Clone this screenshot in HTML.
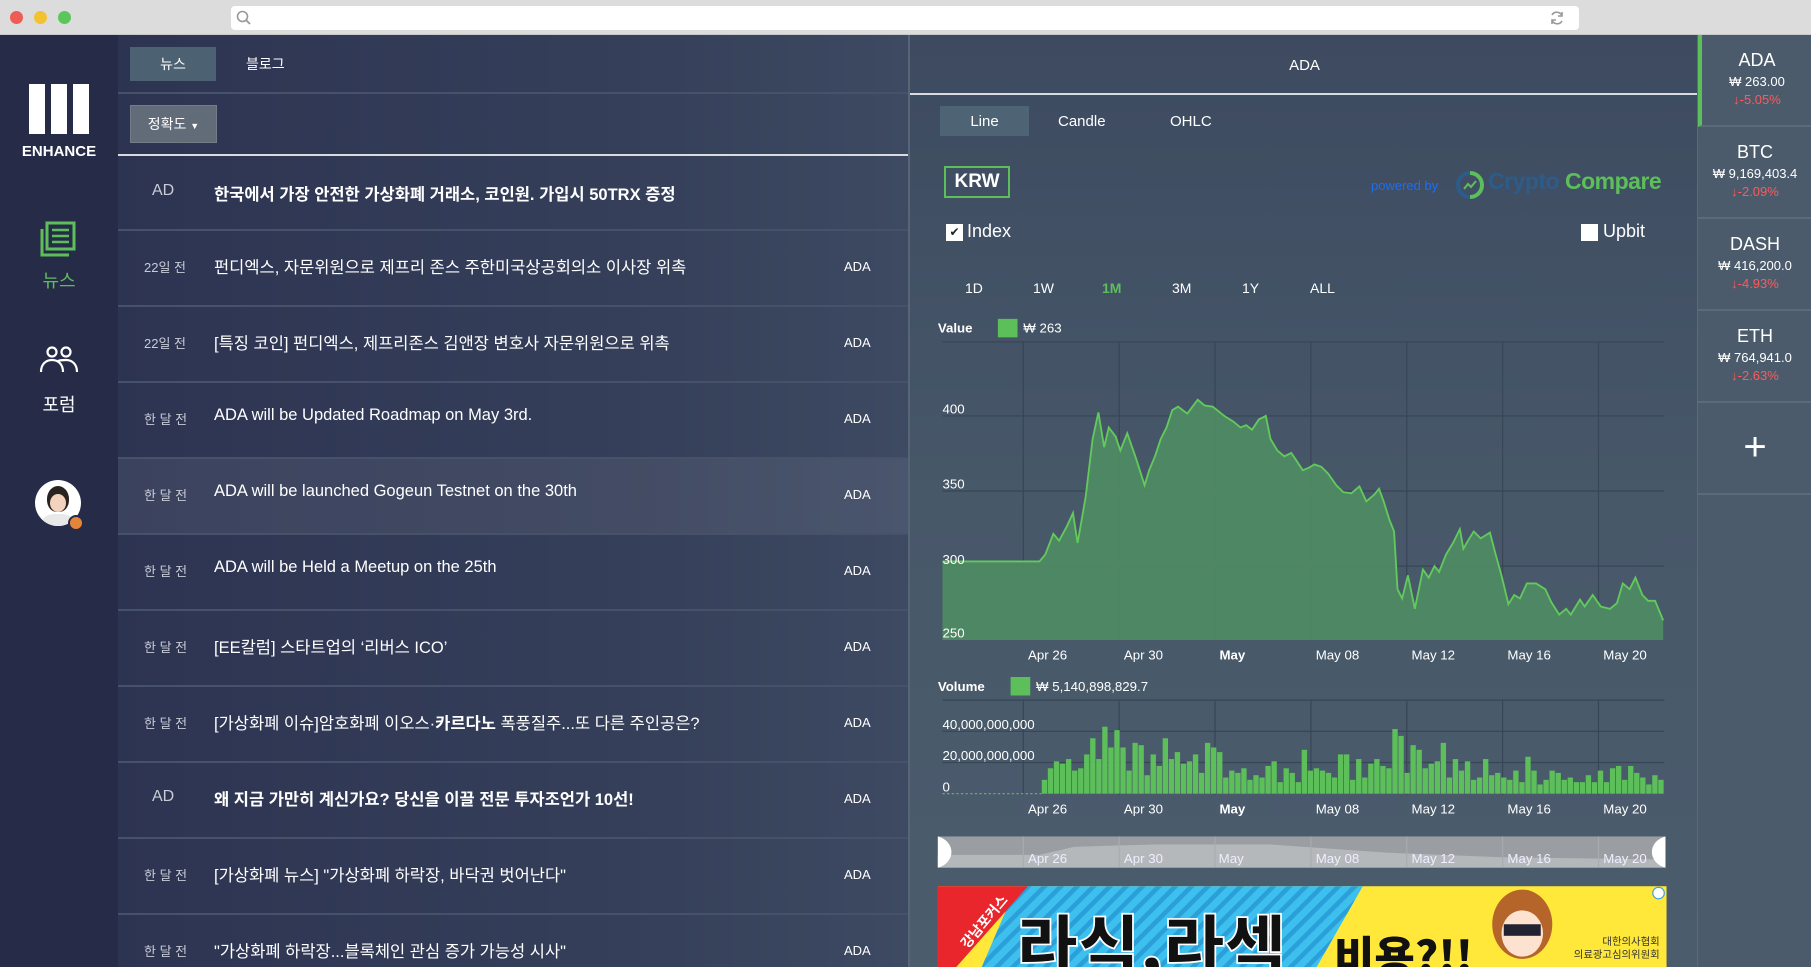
<!DOCTYPE html>
<html style="overflow:hidden"><head><meta charset="utf-8">
<style>
*{margin:0;padding:0;box-sizing:border-box}
html{height:967px;overflow:hidden}
body{width:1811px;height:967px;overflow:hidden;position:relative;background:#2a3150;font-family:"Liberation Sans","Noto Sans CJK KR",sans-serif;color:#fff}
.abs{position:absolute}
#chrome{left:0;top:0;width:1811px;height:35px;background:#dcdcdc;border-bottom:1px solid #c8c8c8}
.dot{width:13px;height:13px;border-radius:50%;top:11px}
#addr{left:231px;top:6px;width:1348px;height:24px;background:#fff;border-radius:4px}
#left{left:0;top:35px;width:118px;height:932px;background:#262c48}
#news{left:118px;top:35px;width:790px;height:932px;background:linear-gradient(90deg,#2d3452 0%,#36405a 70%,#3d4a62 100%)}
#chart{left:908px;top:35px;width:789px;height:932px;background:linear-gradient(180deg,#3d4a60 0%,#475869 50%,#4b5c6d 100%);border-left:2px solid #566577}
#right{left:1697px;top:35px;width:114px;height:932px;background:#4b5b6b;border-left:1px solid #5a6a7a}
.row{position:absolute;left:0;width:790px;height:76px;border-top:2px solid #45526a}
.row .d{position:absolute;left:26px;top:26px;font-size:13px;color:#c8ccd6}
.row .d.ad{left:34px;top:25px;font-size:16px}
.row .t{position:absolute;left:96px;top:23px;font-size:16.5px;color:#fff;white-space:nowrap}
.row .t.b{font-weight:bold}
.row .a{position:absolute;left:726px;top:28px;font-size:13px;color:#fff}
.coin{position:absolute;left:0;width:114px;height:92px;border-bottom:2px solid #5b6b7a;text-align:center}
.coin .n{margin-top:15px;font-size:18px}
.coin .p{font-size:13px;margin-top:3px}
.coin .c{font-size:13px;color:#ff5a5a;margin-top:3px}
</style></head><body>
<div id="chrome" class="abs">
<div class="abs dot" style="left:10px;background:#ee5c56"></div>
<div class="abs dot" style="left:34px;background:#f2c230"></div>
<div class="abs dot" style="left:58px;background:#5bc75a"></div>
<div id="addr" class="abs">
<svg class="abs" style="left:5px;top:4px" width="16" height="16" viewBox="0 0 16 16"><circle cx="6.5" cy="6.5" r="5" fill="none" stroke="#999" stroke-width="1.6"/><path d="M10 10l4 4" stroke="#999" stroke-width="1.8"/></svg>
<svg class="abs" style="left:1318px;top:4px" width="16" height="16" viewBox="0 0 16 16"><path d="M13 6a5.5 5.5 0 0 0-10-1M3 10a5.5 5.5 0 0 0 10 1" fill="none" stroke="#999" stroke-width="1.6"/><path d="M13 2v4h-4M3 14v-4h4" fill="none" stroke="#999" stroke-width="1.6"/></svg>
</div>
</div>

<div id="left" class="abs">
<div class="abs" style="left:29px;top:49px;width:16px;height:50px;background:#fff"></div>
<div class="abs" style="left:51px;top:49px;width:16px;height:50px;background:#fff"></div>
<div class="abs" style="left:73px;top:49px;width:16px;height:50px;background:#fff"></div>
<div class="abs" style="left:0;top:108px;width:118px;text-align:center;font-weight:bold;font-size:15px">ENHANCE</div>
<svg class="abs" style="left:40px;top:186px" width="36" height="36" viewBox="0 0 36 36"><rect x="7" y="2" width="27" height="26" fill="none" stroke="#5cbf5a" stroke-width="3"/><path d="M2 8v26h27" fill="none" stroke="#5cbf5a" stroke-width="3"/><path d="M12 9h17M12 15h17M12 21h17" stroke="#5cbf5a" stroke-width="2.5"/></svg>
<div class="abs" style="left:0;top:232px;width:118px;text-align:center;font-size:18px;color:#5cbf5a">뉴스</div>
<svg class="abs" style="left:38px;top:310px" width="42" height="32" viewBox="0 0 42 32"><circle cx="14" cy="7" r="4.5" fill="none" stroke="#fff" stroke-width="2.2"/><circle cx="28" cy="7" r="4.5" fill="none" stroke="#fff" stroke-width="2.2"/><path d="M3 27c0-8 5-12 11-12s11 4 11 12M20 16c2-1 5-1 8-1 6 0 11 4 11 12" fill="none" stroke="#fff" stroke-width="2.2"/></svg>
<div class="abs" style="left:0;top:356px;width:118px;text-align:center;font-size:18px">포럼</div>
<div class="abs" style="left:35px;top:445px;width:46px;height:46px;border-radius:50%;background:#fff;overflow:hidden"><div class="abs" style="left:12px;top:6px;width:22px;height:26px;border-radius:50% 50% 45% 45%;background:#2a2420"></div><div class="abs" style="left:15px;top:14px;width:16px;height:18px;border-radius:50%;background:#f3d3be"></div><div class="abs" style="left:8px;top:34px;width:30px;height:16px;border-radius:40%;background:#e8e8e8"></div></div>
<div class="abs" style="left:68px;top:480px;width:16px;height:16px;border-radius:50%;background:#e5853a;border:2px solid #262c48"></div>
</div>

<div id="news" class="abs">
<div class="abs" style="left:12px;top:12px;width:86px;height:34px;background:#4c6272;text-align:center;line-height:34px;font-size:14px">뉴스</div>
<div class="abs" style="left:128px;top:12px;height:34px;line-height:34px;font-size:14px">블로그</div>
<div class="abs" style="left:0;top:57px;width:790px;height:2px;background:#45526a"></div>
<div class="abs" style="left:12px;top:70px;width:87px;height:38px;background:#626b78;border:1px solid #747c88;text-align:center;line-height:36px;font-size:14px">정확도 <span style="font-size:9px">▼</span></div>
<div class="abs" style="left:0;top:119px;width:790px;height:2px;background:#d8dbe0"></div>
<div class="row" style="top:121px;height:73px;border-top:none"><span class="d ad" style="top:26px">AD</span><span class="t b" style="top:25px">한국에서 가장 안전한 가상화폐 거래소, 코인원. 가입시 50TRX 증정</span></div>
<div class="row" style="top:194px"><span class="d">22일 전</span><span class="t">펀디엑스, 자문위원으로 제프리 존스 주한미국상공회의소 이사장 위촉</span><span class="a">ADA</span></div>
<div class="row" style="top:270px"><span class="d">22일 전</span><span class="t">[특징 코인] 펀디엑스, 제프리존스 김앤장 변호사 자문위원으로 위촉</span><span class="a">ADA</span></div>
<div class="row" style="top:346px"><span class="d">한 달 전</span><span class="t">ADA will be Updated Roadmap on May 3rd.</span><span class="a">ADA</span></div>
<div class="row" style="top:422px;background:rgba(255,255,255,0.07)"><span class="d">한 달 전</span><span class="t">ADA will be launched Gogeun Testnet on the 30th</span><span class="a">ADA</span></div>
<div class="row" style="top:498px"><span class="d">한 달 전</span><span class="t">ADA will be Held a Meetup on the 25th</span><span class="a">ADA</span></div>
<div class="row" style="top:574px"><span class="d">한 달 전</span><span class="t">[EE칼럼] 스타트업의 ‘리버스 ICO’</span><span class="a">ADA</span></div>
<div class="row" style="top:650px"><span class="d">한 달 전</span><span class="t">[가상화폐 이슈]암호화폐 이오스·<b>카르다노</b> 폭풍질주...또 다른 주인공은?</span><span class="a">ADA</span></div>
<div class="row" style="top:726px"><span class="d ad">AD</span><span class="t b">왜 지금 가만히 계신가요? 당신을 이끌 전문 투자조언가 10선!</span><span class="a">ADA</span></div>
<div class="row" style="top:802px"><span class="d">한 달 전</span><span class="t">[가상화폐 뉴스] "가상화폐 하락장, 바닥권 벗어난다"</span><span class="a">ADA</span></div>
<div class="row" style="top:878px"><span class="d">한 달 전</span><span class="t">"가상화폐 하락장...블록체인 관심 증가 가능성 시사"</span><span class="a">ADA</span></div>
</div>

<div id="chart" class="abs">
<div class="abs" style="left:0;top:22px;width:789px;text-align:center;font-size:15px">ADA</div>
<div class="abs" style="left:0;top:58px;width:787px;height:2px;background:#d8dbe0"></div>
<div class="abs" style="left:30px;top:71px;width:89px;height:30px;background:#4e6474;text-align:center;line-height:31px;font-size:15px">Line</div>
<div class="abs" style="left:148px;top:72px;line-height:30px;font-size:15px">Candle</div>
<div class="abs" style="left:260px;top:72px;line-height:30px;font-size:15px">OHLC</div>
<div class="abs" style="left:34px;top:131px;width:66px;height:32px;border:2px solid #5cbf5a;text-align:center;line-height:28px;font-size:19px;font-weight:bold">KRW</div>
<div class="abs" style="left:461px;top:143px;font-size:13px;color:#1a6ff0">powered by</div>
<svg class="abs" style="left:543px;top:134px" width="36" height="32" viewBox="0 0 36 32"><circle cx="17" cy="16" r="12" fill="none" stroke="#2c5c8a" stroke-width="4"/><path d="M17 4a12 12 0 0 1 0 24" fill="none" stroke="#5cbf5a" stroke-width="4"/><path d="M11 20l4-5 3 3 5-6" fill="none" stroke="#5cbf5a" stroke-width="2"/></svg>
<div class="abs" style="left:578px;top:133px;font-size:23px;font-weight:bold;letter-spacing:-0.5px"><span style="color:#2c5c8a">Crypto</span> <span style="color:#5cbf5a">Compare</span></div>
<div class="abs" style="left:36px;top:189px;width:17px;height:17px;background:#fff;color:#222;font-size:12px;text-align:center;line-height:17px">✔</div>
<div class="abs" style="left:57px;top:186px;font-size:18px">Index</div>
<div class="abs" style="left:671px;top:189px;width:17px;height:17px;background:#fff"></div>
<div class="abs" style="left:693px;top:186px;font-size:18px">Upbit</div>
<div class="abs" style="left:55px;top:245px;font-size:14px">1D</div>
<div class="abs" style="left:123px;top:245px;font-size:14px">1W</div>
<div class="abs" style="left:192px;top:245px;font-size:14px;color:#5cbf5a;font-weight:bold">1M</div>
<div class="abs" style="left:262px;top:245px;font-size:14px">3M</div>
<div class="abs" style="left:332px;top:245px;font-size:14px">1Y</div>
<div class="abs" style="left:400px;top:245px;font-size:14px">ALL</div>
</div>

<svg class="abs" style="left:0;top:0" width="1811" height="967" viewBox="0 0 1568 837" preserveAspectRatio="none" font-family="Liberation Sans, sans-serif">
<g font-size="11.5" fill="#fff">
<text x="812" y="288" font-weight="bold">Value</text>
<rect x="864" y="276" width="17" height="16" fill="#5cbf5a"/>
<text x="886" y="288">₩ 263</text>
</g>
<g stroke="#374556" stroke-width="1">
<line x1="816" y1="296" x2="1441" y2="296"/>
<line x1="816" y1="360" x2="1441" y2="360"/><line x1="816" y1="425" x2="1441" y2="425"/><line x1="816" y1="490" x2="1441" y2="490"/>
<line x1="886" y1="296" x2="886" y2="554"/><line x1="969" y1="296" x2="969" y2="554"/><line x1="1052" y1="296" x2="1052" y2="554"/><line x1="1135" y1="296" x2="1135" y2="554"/><line x1="1218" y1="296" x2="1218" y2="554"/><line x1="1301" y1="296" x2="1301" y2="554"/><line x1="1384" y1="296" x2="1384" y2="554"/>
</g>
<polygon fill="#4f8a63" fill-opacity="0.95" points="816,554 816,486 900,486 905,480 912,462 917,468 924,455 929,444 933,470 940,430 946,380 951,357 956,387 960,370 966,378 970,390 976,375 984,398 991,420 995,407 1000,395 1005,380 1010,370 1015,355 1020,352 1028,358 1037,346 1043,351 1050,352 1060,360 1068,365 1074,370 1079,368 1084,372 1090,363 1096,360 1100,380 1106,390 1112,395 1118,392 1122,398 1128,407 1133,405 1138,402 1144,404 1150,410 1157,420 1163,426 1170,427 1177,421 1183,434 1190,428 1194,423 1198,434 1203,450 1207,460 1210,510 1214,518 1219,498 1225,527 1232,493 1237,500 1242,490 1246,495 1252,480 1258,470 1264,458 1267,475 1271,468 1276,460 1282,466 1290,461 1295,480 1300,498 1306,523 1311,515 1316,518 1322,505 1330,505 1338,510 1343,521 1350,532 1356,527 1360,532 1368,519 1372,525 1379,515 1386,525 1394,527 1400,522 1405,505 1411,510 1416,500 1422,515 1427,520 1433,520 1440,537 1440,554"/>
<polyline fill="none" stroke="#62c95c" stroke-width="1.6" points="816,486 900,486 905,480 912,462 917,468 924,455 929,444 933,470 940,430 946,380 951,357 956,387 960,370 966,378 970,390 976,375 984,398 991,420 995,407 1000,395 1005,380 1010,370 1015,355 1020,352 1028,358 1037,346 1043,351 1050,352 1060,360 1068,365 1074,370 1079,368 1084,372 1090,363 1096,360 1100,380 1106,390 1112,395 1118,392 1122,398 1128,407 1133,405 1138,402 1144,404 1150,410 1157,420 1163,426 1170,427 1177,421 1183,434 1190,428 1194,423 1198,434 1203,450 1207,460 1210,510 1214,518 1219,498 1225,527 1232,493 1237,500 1242,490 1246,495 1252,480 1258,470 1264,458 1267,475 1271,468 1276,460 1282,466 1290,461 1295,480 1300,498 1306,523 1311,515 1316,518 1322,505 1330,505 1338,510 1343,521 1350,532 1356,527 1360,532 1368,519 1372,525 1379,515 1386,525 1394,527 1400,522 1405,505 1411,510 1416,500 1422,515 1427,520 1433,520 1440,537"/>
<g font-size="11.5" fill="#fff">
<text x="816" y="358">400</text><text x="816" y="423">350</text><text x="816" y="488">300</text><text x="816" y="552">250</text>
</g>
<g font-size="11.5" fill="#fff" text-anchor="middle">
<text x="907" y="571">Apr 26</text><text x="990" y="571">Apr 30</text><text x="1067" y="571" font-weight="bold">May</text><text x="1158" y="571">May 08</text><text x="1241" y="571">May 12</text><text x="1324" y="571">May 16</text><text x="1407" y="571">May 20</text>
</g>
<g font-size="11.5" fill="#fff">
<text x="812" y="598" font-weight="bold">Volume</text>
<rect x="875" y="586" width="17" height="16" fill="#5cbf5a"/>
<text x="897" y="598">₩ 5,140,898,829.7</text>
</g>
<g stroke="#374556" stroke-width="1">
<line x1="816" y1="606" x2="1441" y2="606"/><line x1="816" y1="633" x2="1441" y2="633"/><line x1="816" y1="660" x2="1441" y2="660"/>
<line x1="886" y1="606" x2="886" y2="688"/><line x1="969" y1="606" x2="969" y2="688"/><line x1="1052" y1="606" x2="1052" y2="688"/><line x1="1135" y1="606" x2="1135" y2="688"/><line x1="1218" y1="606" x2="1218" y2="688"/><line x1="1301" y1="606" x2="1301" y2="688"/><line x1="1384" y1="606" x2="1384" y2="688"/>
</g>
<line x1="816" y1="687" x2="902" y2="687" stroke="#5cbf5a" stroke-dasharray="2,2"/>
<g id="bars" fill="#5cbf5a"></g>
<g font-size="11.5" fill="#fff">
<text x="816" y="631">40,000,000,000</text><text x="816" y="658">20,000,000,000</text><text x="816" y="685">0</text>
</g>
<g font-size="11.5" fill="#fff" text-anchor="middle">
<text x="907" y="704">Apr 26</text><text x="990" y="704">Apr 30</text><text x="1067" y="704" font-weight="bold">May</text><text x="1158" y="704">May 08</text><text x="1241" y="704">May 12</text><text x="1324" y="704">May 16</text><text x="1407" y="704">May 20</text>
</g>
<rect x="812" y="724" width="630" height="27" fill="#9a9ea2"/>
<path d="M812 751 L812 740 L900 740 L930 733 L960 732 L1000 731 L1100 731 L1200 738 L1300 742 L1442 744 L1442 751Z" fill="#b5b8bb"/>
<g stroke="#a8acb0"><line x1="886" y1="724" x2="886" y2="751"/><line x1="969" y1="724" x2="969" y2="751"/><line x1="1052" y1="724" x2="1052" y2="751"/><line x1="1135" y1="724" x2="1135" y2="751"/><line x1="1218" y1="724" x2="1218" y2="751"/><line x1="1301" y1="724" x2="1301" y2="751"/><line x1="1384" y1="724" x2="1384" y2="751"/></g>
<path d="M812 724 a16 14 0 0 1 0 27Z" fill="#fff"/><path d="M1442 724 a16 14 0 0 0 0 27Z" fill="#fff"/>
<g font-size="11.5" fill="#eef" text-anchor="middle">
<text x="907" y="747">Apr 26</text><text x="990" y="747">Apr 30</text><text x="1066" y="747">May</text><text x="1158" y="747">May 08</text><text x="1241" y="747">May 12</text><text x="1324" y="747">May 16</text><text x="1407" y="747">May 20</text>
</g>
<defs><pattern id="st" width="10" height="10" patternUnits="userSpaceOnUse" patternTransform="rotate(45)"><rect width="10" height="10" fill="#3ec0ef"/><rect width="4" height="10" fill="#2a9fd8"/></pattern><clipPath id="adc"><rect x="812" y="767" width="631" height="70"/></clipPath></defs>
<g clip-path="url(#adc)">
<rect x="812" y="767" width="631" height="70" fill="#ffe83a"/>
<polygon points="880,767 1180,767 1140,837 850,837" fill="url(#st)"/>
<polygon points="812,767 890,767 828,837 812,837" fill="#e8262c"/>
<text x="822" y="812" font-size="12" fill="#fff" font-weight="bold" transform="rotate(-50 840 800)" font-family="Noto Sans CJK KR, sans-serif">강남포커스</text>
<text x="880" y="840" font-size="58" font-weight="900" fill="#111" stroke="#fff" stroke-width="1.5" font-family="Noto Sans CJK KR, sans-serif">라식,라섹</text>
<text x="1155" y="842" font-size="38" font-weight="900" fill="#111" font-family="Noto Sans CJK KR, sans-serif">비용?!!</text>
<ellipse cx="1318" cy="800" rx="26" ry="30" fill="#b5642a"/>
<ellipse cx="1318" cy="808" rx="18" ry="20" fill="#fde2d0"/>
<rect x="1302" y="800" width="32" height="10" fill="#223"/>
<text x="1437" y="818" font-size="9" fill="#333" text-anchor="end" font-family="Noto Sans CJK KR, sans-serif">대한의사협회</text>
<text x="1437" y="829" font-size="9" fill="#333" text-anchor="end" font-family="Noto Sans CJK KR, sans-serif">의료광고심의위원회</text>
<circle cx="1436" cy="773" r="5" fill="#fff" stroke="#3aa0e0"/>
</g>
</svg>

<div id="right" class="abs">
<div class="coin" style="top:0;border-left:4px solid #5cbf5a"><div class="n">ADA</div><div class="p">₩ 263.00</div><div class="c">↓-5.05%</div></div>
<div class="coin" style="top:92px"><div class="n">BTC</div><div class="p">₩ 9,169,403.4</div><div class="c">↓-2.09%</div></div>
<div class="coin" style="top:184px"><div class="n">DASH</div><div class="p">₩ 416,200.0</div><div class="c">↓-4.93%</div></div>
<div class="coin" style="top:276px"><div class="n">ETH</div><div class="p">₩ 764,941.0</div><div class="c">↓-2.63%</div></div>
<div class="coin" style="top:368px"><div style="font-size:40px;line-height:88px;font-weight:200">+</div></div>
</div>

<script>
var h=[12,22,28,26,30,20,22,34,48,30,58,40,55,40,20,44,42,16,34,24,48,30,36,26,28,34,18,44,40,36,14,20,18,22,12,16,14,24,28,10,22,18,10,38,20,22,20,18,14,34,34,12,30,14,26,30,24,22,56,50,18,42,38,22,26,28,44,14,30,20,28,12,14,30,16,18,14,12,20,10,32,20,8,12,20,18,12,14,10,10,16,10,20,10,22,24,12,24,18,14,8,16,12];
var g=document.getElementById('bars'),s='',x0=902,w=(1441-x0)/h.length;
for(var i=0;i<h.length;i++){s+='<rect x="'+(x0+i*w).toFixed(2)+'" y="'+(687-h[i])+'" width="'+(w-0.6).toFixed(2)+'" height="'+h[i]+'"/>';}
g.innerHTML=s;
</script>
</body></html>
